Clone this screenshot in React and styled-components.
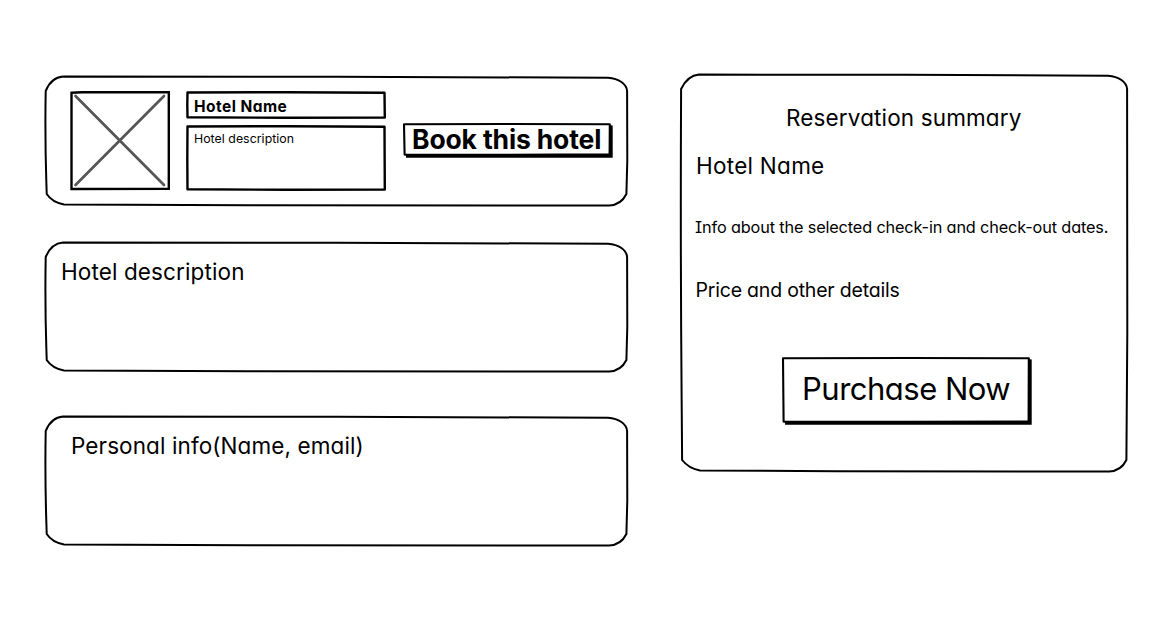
import React from 'react';
import styled, { createGlobalStyle } from 'styled-components';

const GlobalStyle = createGlobalStyle`
  * { box-sizing: border-box; }
  body {
    margin: 0;
    background: #fff;
    color: #000;
    font-family: Inter, 'Liberation Sans', sans-serif;
    font-feature-settings: 'cv11' 1, 'cv08' 1;
  }
`;

const Page = styled.main`
  display: flex;
  align-items: flex-start;
  gap: 52px;
  width: 1176px;
  height: 619px;
  padding: 74px 0 0 44px;
  overflow: hidden;
`;

const Column = styled.div`
  display: flex;
  flex-direction: column;
  width: 584px;
  padding-top: 2px;
`;

const Panel = styled.section`
  position: relative;
  height: 130px;
  margin-bottom: ${(p) => p.$gap || 0}px;
  padding: ${(p) => p.$pad};
`;

const HotelRow = styled(Panel)`
  display: flex;
  align-items: flex-start;
`;

const Summary = styled(Panel)`
  display: flex;
  flex-direction: column;
  align-items: flex-start;
  width: 448px;
  height: 398px;
`;

const Sketch = styled.svg`
  position: absolute;
  inset: 0;
  overflow: visible;
  pointer-events: none;
  fill: none;
  stroke: #000;
  stroke-linejoin: round;
  stroke-linecap: round;
`;

const Picture = styled.div`
  position: relative;
  width: 100px;
  height: 99px;
  margin-right: 16px;
`;

const Fields = styled.div`
  display: flex;
  flex-direction: column;
  gap: 6px;
  width: 200px;
  margin-right: 17px;
`;

const Field = styled.div`
  position: relative;
  height: ${(p) => p.$h}px;
  padding: ${(p) => p.$top}px 0 0 8px;
`;

const Text = styled.div`
  font-size: ${(p) => p.$size}px;
  line-height: ${(p) => p.$line}px;
  font-weight: ${(p) => p.$weight || 430};
  letter-spacing: ${(p) => p.$track || 0}px;
  margin-bottom: ${(p) => p.$after || 0}px;
  margin-left: ${(p) => p.$indent || 0}px;
  white-space: nowrap;
`;

const Button = styled.button`
  position: relative;
  display: block;
  width: ${(p) => p.$w}px;
  height: ${(p) => p.$h}px;
  margin: ${(p) => p.$margin};
  padding: ${(p) => p.$pad};
  border: 0;
  background: none;
  color: inherit;
  font-family: inherit;
  font-feature-settings: inherit;
  text-align: left;
`;

function PanelOutline({ w, h, left = 1 }) {
  const d = `M${left + 0.7} 15 C5 7 11 1.3 19 .6 L${w * 0.5} .8 L${w - 20} 1.7 C${w - 9} 2.5 ${w - 1.5} 8 ${w - 0.9} 15
    L${w - 0.7} ${h * 0.65} L${w - 1.6} ${h - 12} C${w - 5} ${h - 5} ${w - 11} ${h - 0.8} ${w - 19} ${h - 0.5}
    L${w * 0.35} ${h - 0.7} L20 ${h - 1.5} C12 ${h - 3} 6 ${h - 7} ${left + 1.7} ${h - 12} C${left + 1.2} ${h * 0.75} ${left - 0.3} ${h * 0.55} ${left + 0.7} 15 Z`;
  return (
    <Sketch width={w} height={h}>
      <path d={d} strokeWidth="2" />
    </Sketch>
  );
}

function BoxOutline({ w, h }) {
  return (
    <Sketch width={w} height={h}>
      <path d={`M1.5 1.5 L${w * 0.5} 1.2 L${w - 1.5} 1.7 L${w - 1.2} ${h - 1.5} L${w * 0.5} ${h - 1.2} L1.5 ${h - 1.8} L1.3 ${h * 0.5} Z`} strokeWidth="2.4" />
    </Sketch>
  );
}

function ButtonOutline({ w, h }) {
  return (
    <Sketch width={w} height={h}>
      <path d={`M${w - 4} 2 L${w - 0.3} 2.5 V${h - 0.2} H3 V${h - 4} H${w - 4} Z`} fill="#000" stroke="none" />
      <path d={`M1 1.3 L${w * 0.5} 1 L${w - 3.2} 1.2 L${w - 3.4} ${h - 3.6} L${w * 0.5} ${h - 3.3} L1.6 ${h - 3.4} Z`} strokeWidth="2.1" />
    </Sketch>
  );
}

function PicturePlaceholder() {
  return (
    <Picture>
      <Sketch width="100" height="99">
        <path d="M5.5 5 L94 94 M94 5 L5.5 94" stroke="#555" strokeWidth="2.7" />
        <path d="M1.5 1.8 L12 1.2 L98.8 1.2 L98.8 97.8 L1.5 98 Z" strokeWidth="2.4" strokeLinejoin="miter" />
      </Sketch>
    </Picture>
  );
}

export default function App() {
  return (
    <>
      <GlobalStyle />
      <Page>
        <Column>
          <HotelRow $gap={36} $pad="15px 0 0 26px">
            <PanelOutline w={584} h={130} />
            <PicturePlaceholder />
            <Fields>
              <Field $h={28} $top={5}>
                <BoxOutline w={200} h={28} />
                <Text $size={15.5} $line={21} $weight={680} $track={0.45}>Hotel Name</Text>
              </Field>
              <Field $h={66} $top={4}>
                <BoxOutline w={200} h={66} />
                <Text $size={12.3} $line={20} $weight={400} $track={0.05}>Hotel description</Text>
              </Field>
            </Fields>
            <Button $w={210} $h={35} $margin="32px 0 0" $pad="0 0 4px 9px">
              <ButtonOutline w={210} h={35} />
              <Text $size={26.5} $line={32} $weight={680} $track={-0.15}>Book this hotel</Text>
            </Button>
          </HotelRow>
          <Panel $gap={44} $pad="14px 0 0 17px">
            <PanelOutline w={584} h={130} />
            <Text $size={22.5} $line={32} $track={0.12}>Hotel description</Text>
          </Panel>
          <Panel $pad="14px 0 0 27px">
            <PanelOutline w={584} h={130} />
            <Text $size={22.5} $line={32} $track={0.1}>Personal info(Name, email)</Text>
          </Panel>
        </Column>
        <Summary $pad="28px 0 0 15px">
          <PanelOutline w={448} h={398} left={0.4} />
          <Text $size={22.5} $line={32} $indent={91} $after={16} $track={0.14}>Reservation summary</Text>
          <Text $size={22.5} $line={32} $indent={1} $after={33} $track={0.27}>Hotel Name</Text>
          <Text $size={16.3} $line={24} $after={38} $track={-0.15}>Info about the selected check-in and check-out dates.</Text>
          <Text $size={19.5} $line={26} $indent={0.5} $track={-0.2}>Price and other details</Text>
          <Button $w={250} $h={68} $margin="54px 0 0 87px" $pad="0 0 5px 20px">
            <ButtonOutline w={250} h={68} />
            <Text $size={31} $line={40} $track={-0.5}>Purchase Now</Text>
          </Button>
        </Summary>
      </Page>
    </>
  );
}
